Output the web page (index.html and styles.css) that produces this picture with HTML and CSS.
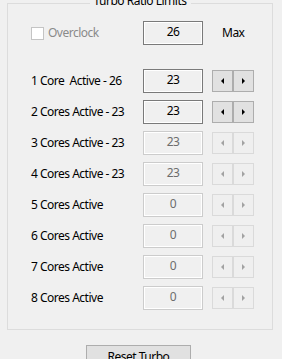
FILE: index.html
```html
<!DOCTYPE html>
<html>
<head>
<meta charset="utf-8">
<link rel="stylesheet" href="styles.css">
</head>
<body>
<div class="group">
  <div class="title"><span>Turbo Ratio Limits</span></div>
  <div class="row top">
    <div class="label check-label"><span class="checkbox"></span><span class="dim">Overclock</span></div>
    <div class="edit on">26</div>
    <div class="max">Max</div>
  </div>
  <div class="rows">
    <div class="row">
      <div class="label">1 Core&nbsp; Active - 26</div>
      <div class="edit on">23</div>
      <div class="spin on"><span class="btn"><i class="arr l"></i></span><span class="btn"><i class="arr r"></i></span></div>
    </div>
    <div class="row">
      <div class="label">2 Cores Active - 23</div>
      <div class="edit on">23</div>
      <div class="spin on"><span class="btn"><i class="arr l"></i></span><span class="btn"><i class="arr r"></i></span></div>
    </div>
    <div class="row">
      <div class="label">3 Cores Active - 23</div>
      <div class="edit">23</div>
      <div class="spin"><span class="btn"><i class="arr l"></i></span><span class="btn"><i class="arr r"></i></span></div>
    </div>
    <div class="row">
      <div class="label">4 Cores Active - 23</div>
      <div class="edit">23</div>
      <div class="spin"><span class="btn"><i class="arr l"></i></span><span class="btn"><i class="arr r"></i></span></div>
    </div>
    <div class="row">
      <div class="label">5 Cores Active</div>
      <div class="edit">0</div>
      <div class="spin"><span class="btn"><i class="arr l"></i></span><span class="btn"><i class="arr r"></i></span></div>
    </div>
    <div class="row">
      <div class="label">6 Cores Active</div>
      <div class="edit">0</div>
      <div class="spin"><span class="btn"><i class="arr l"></i></span><span class="btn"><i class="arr r"></i></span></div>
    </div>
    <div class="row">
      <div class="label">7 Cores Active</div>
      <div class="edit">0</div>
      <div class="spin"><span class="btn"><i class="arr l"></i></span><span class="btn"><i class="arr r"></i></span></div>
    </div>
    <div class="row">
      <div class="label">8 Cores Active</div>
      <div class="edit">0</div>
      <div class="spin"><span class="btn"><i class="arr l"></i></span><span class="btn"><i class="arr r"></i></span></div>
    </div>
  </div>
</div>
<div class="actions">
  <button class="reset">Reset Turbo</button>
</div>
</body>
</html>
```
FILE: styles.css
```css
html, body {
  margin: 0;
  padding: 0;
  background: #f0f0f0;
  font-family: "Noto Sans", "DejaVu Sans", sans-serif;
  font-size: 12px;
  letter-spacing: -0.5px;
  color: #000;
  overflow: hidden;
}

.group {
  position: relative;
  box-sizing: border-box;
  margin: 3px 0 0 7px;
  width: 266px;
  height: 327px;
  border: 1px solid #dcdcdc;
  padding: 17px 0 0 23px;
}

.title {
  position: absolute;
  top: -11px;
  left: 0;
  right: 0;
  text-align: center;
  line-height: 16px;
}

.title span {
  background: #f0f0f0;
  padding: 0 4px;
}

.row {
  display: flex;
  align-items: center;
  height: 24px;
}

.rows {
  display: flex;
  flex-direction: column;
  gap: 7px;
  margin-top: 24px;
}

.label {
  width: 112px;
  white-space: nowrap;
  line-height: 16px;
}

.check-label {
  display: flex;
  align-items: center;
  gap: 4px;
}

.checkbox {
  width: 13px;
  height: 13px;
  box-sizing: border-box;
  border: 1px solid #c4c4c4;
  background: #fff;
}

.dim {
  color: #8a8a8a;
}

.edit {
  box-sizing: border-box;
  width: 60px;
  height: 24px;
  border: 1px solid #cccccc;
  box-shadow: inset 0 0 0 1px #ffffff;
  background: #f0f0f0;
  text-align: center;
  line-height: 16px;
  padding-top: 2px;
  color: #6d6d6d;
}

.edit.on {
  border-color: #7a7a7a;
  color: #000;
}

.max {
  margin-left: 19px;
  line-height: 16px;
}

.spin {
  display: flex;
  margin-left: 9px;
  height: 22px;
}

.btn {
  box-sizing: border-box;
  width: 21px;
  height: 22px;
  border: 1px solid #dadada;
  background: #efefef;
  display: flex;
  align-items: center;
  justify-content: center;
}

.spin.on .btn {
  border-color: #adadad;
  background: #e1e1e1;
}

.arr {
  display: block;
  width: 0;
  height: 0;
  border-top: 3px solid transparent;
  border-bottom: 3px solid transparent;
}

.arr.l {
  border-right: 3px solid #a2a2a2;
}

.arr.r {
  border-left: 3px solid #a2a2a2;
}

.spin.on .arr.l {
  border-right-color: #000;
}

.spin.on .arr.r {
  border-left-color: #000;
}

.actions {
  padding: 15px 0 0 86px;
}

.reset {
  box-sizing: border-box;
  width: 105px;
  height: 23px;
  border: 1px solid #adadad;
  background: #e1e1e1;
  font-family: inherit;
  font-size: 12px;
  letter-spacing: -0.5px;
  color: #000;
  padding: 0;
  border-radius: 0;
}
```
